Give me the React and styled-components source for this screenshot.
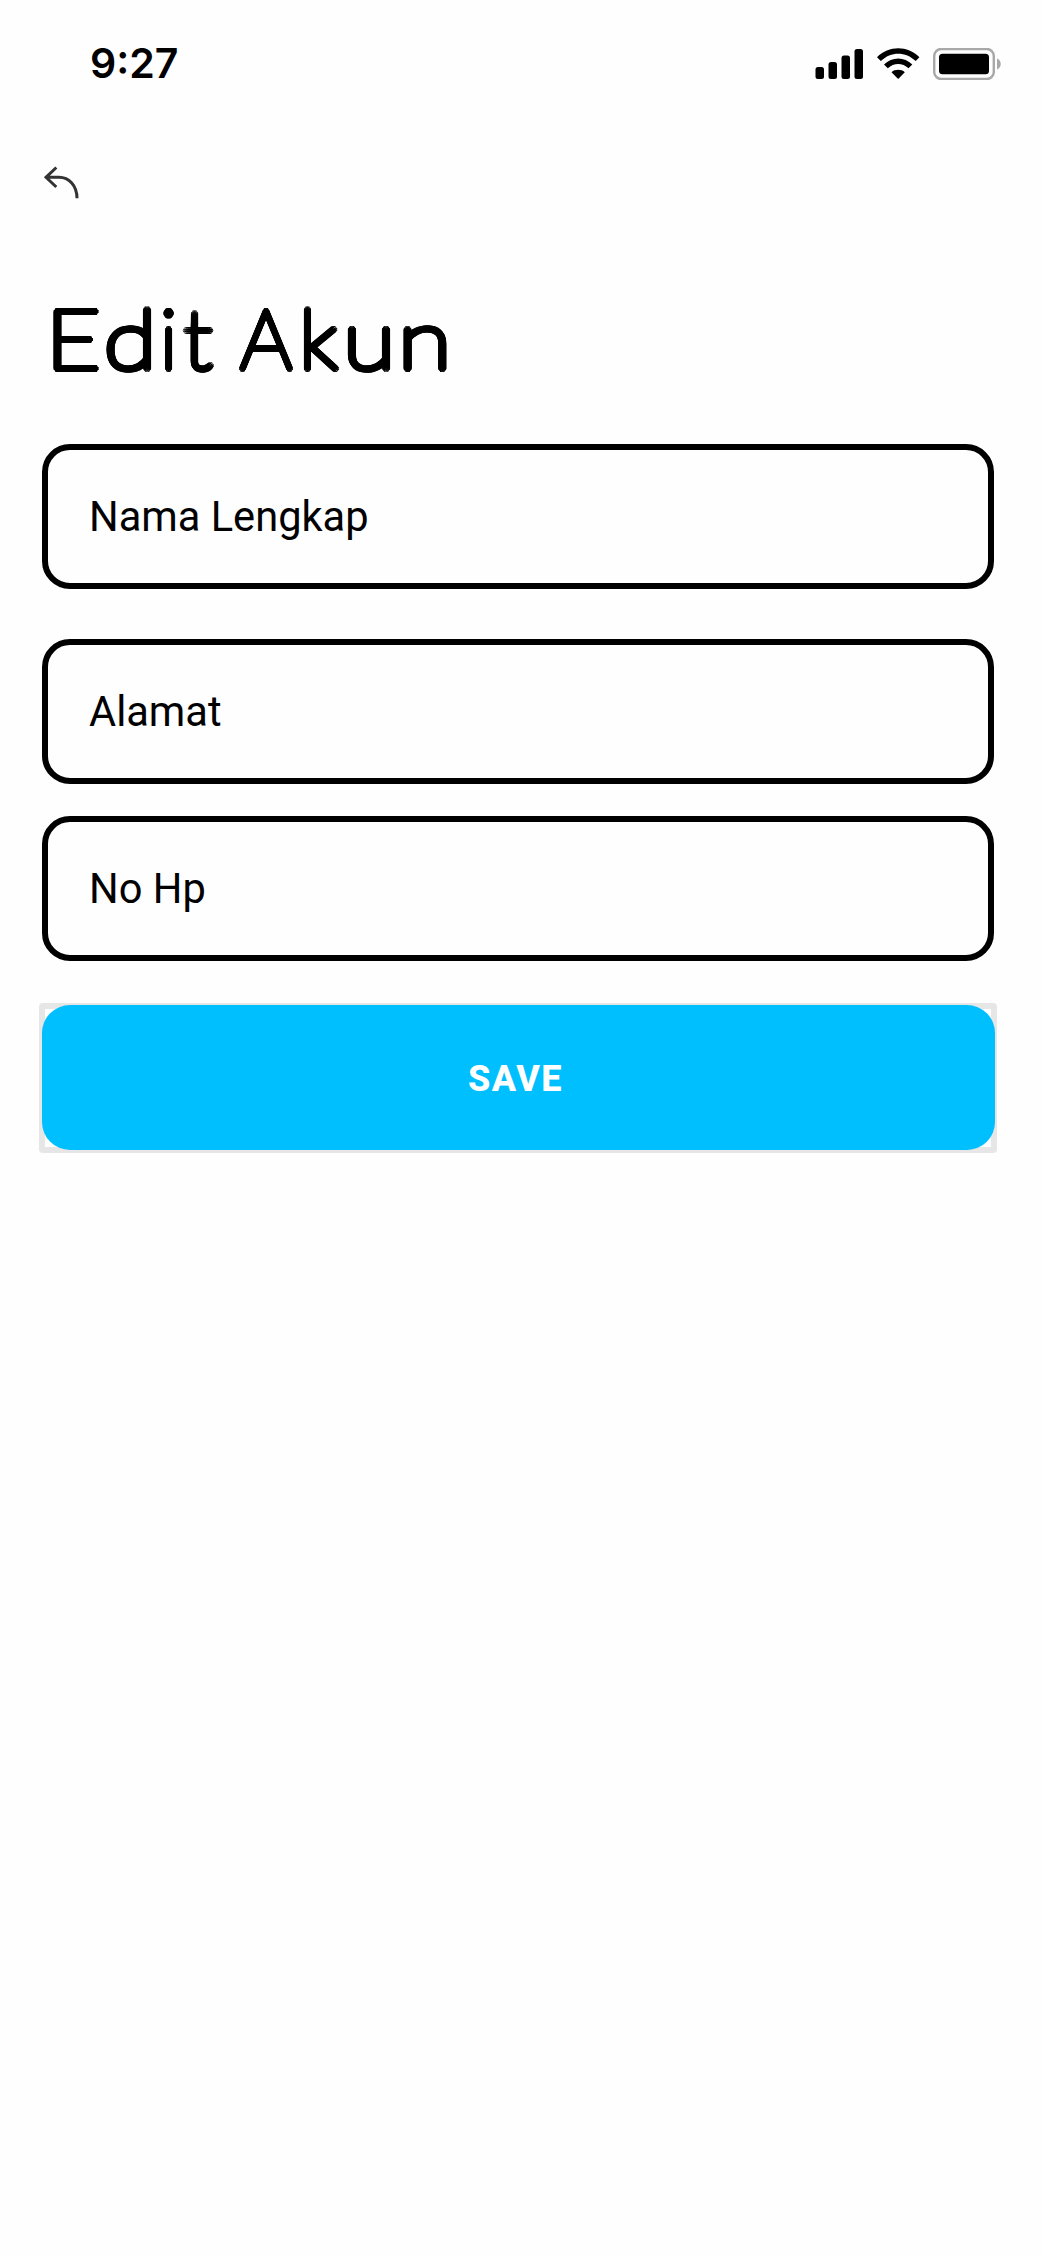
import React from "react";
import styled, { createGlobalStyle } from "styled-components";

const GlobalStyle = createGlobalStyle`
  * { box-sizing: border-box; }
  body { margin: 0; background: #fefefe; }
`;

const Screen = styled.main`
  width: 1042px;
  height: 2256px;
  background: #fefefe;
  color: #000;
  font-family: Roboto, "Liberation Sans", sans-serif;
  display: flex;
  flex-direction: column;
  overflow: hidden;
`;

const StatusBar = styled.header`
  height: 128px;
  padding: 0 41px 0 90px;
  display: flex;
  justify-content: space-between;
`;

const Time = styled.time`
  margin-top: 39px;
  font: 600 41px/48px Inter, sans-serif;
`;

const StatusIcons = styled.svg`
  width: 186px;
  height: 32px;
  margin-top: 48px;
`;

const BackButton = styled.button`
  width: 40px;
  height: 40px;
  margin: 34px 0 0 42px;
  padding: 0;
  border: 0;
  background: none;
  display: flex;
`;

// A ring of offset shadows thickens the hairline face with round stroke ends.
const ring = (radius, count) =>
  Array.from({ length: count }, (_, i) => {
    const angle = (i * 2 * Math.PI) / count;
    const x = (radius * Math.cos(angle)).toFixed(2);
    const y = (radius * Math.sin(angle)).toFixed(2);
    return `${x}px ${y}px 0 #000`;
  }).join(", ");

const Title = styled.h1`
  margin: 76px 0 0 46px;
  height: 120px;
  display: flex;
  font: 100 82.5px/120px Lato, sans-serif;
  text-shadow: ${ring(2.9, 24)}, ${ring(1.6, 12)};
  white-space: pre;
`;

const Glyph = styled.span`
  width: ${(p) => p.$width}px;
  flex: none;
  transform: scaleX(${(p) => p.$stretch});
  transform-origin: 0 50%;
`;

const Form = styled.form`
  margin: 46px 45px 0 39px;
  display: flex;
  flex-direction: column;
`;

const Field = styled.label`
  height: 145px;
  margin: 0 3px ${(p) => p.$gap}px 3px;
  padding: 0 0 0 41px;
  border: 6px solid #000;
  border-radius: 28px;
  display: flex;
  align-items: center;
  font-size: 41.6px;
  line-height: 49px;
`;

const SaveFrame = styled.div`
  width: 958px;
  height: 150px;
  padding: 2px;
  border-radius: 4px;
  background: linear-gradient(#fff, #fff) center / 946px 138px no-repeat #e6e6e6;
`;

const SaveButton = styled.button`
  width: 953px;
  height: 145px;
  margin-left: 1px;
  padding: 3px 6px 0 0;
  display: block;
  border: 0;
  border-radius: 28px;
  background: #00bfff;
  color: #fff;
  font: 800 36px/42px Roboto, sans-serif;
  letter-spacing: 1.5px;
`;

const titleLetters = [
  ["E", 58, 1.14], ["d", 56, 1.17], ["i", 23, 1], ["t", 28, 1.1], [" ", 29, 1],
  ["A", 59, 0.99], ["k", 44, 1.05], ["u", 55, 1.17], ["n", 50, 1.19],
];

const fields = [
  { name: "Nama Lengkap", gap: 50 },
  { name: "Alamat", gap: 32 },
  { name: "No Hp", gap: 42 },
];

export default function App() {
  return (
    <Screen>
      <GlobalStyle />
      <StatusBar>
        <Time>9:27</Time>
        <StatusIcons viewBox="815 48 186 32">
          <rect x="815.5" y="67" width="8.5" height="12" rx="2.5" />
          <rect x="828.5" y="62" width="8.5" height="17" rx="2.5" />
          <rect x="841.5" y="55.5" width="8.5" height="23.5" rx="2.5" />
          <rect x="854.5" y="49" width="8.5" height="30" rx="2.5" />
          <path d="M877 57.2C889 45.3 907.500 45.300 919.400 57.200L915.700 61C905.500 51.200 891 51.200 880.800 61Z" />
          <path d="M884 64.500C892 56.500 904.500 56.500 912.300 64.500L908.500 68.300C902.500 62.500 893.800 62.500 887.800 68.300Z" />
          <path d="M891.500 72.200C895 69 901.300 69 904.800 72.200L898.200 79Z" />
          <rect x="934.2" y="49" width="59.600" height="30" rx="7" fill="none" stroke="#a8a8a8" strokeWidth="2.4" />
          <rect x="939" y="53.700" width="50" height="20.500" rx="3.500" />
          <path d="M997 58.500C1002 60.500 1002 67.500 997 69.500Z" fill="#a8a8a8" />
        </StatusIcons>
      </StatusBar>
      <BackButton type="button" aria-label="Kembali">
        <svg width="40" height="40" viewBox="42 162 40 40" fill="none" stroke="#333" strokeWidth="3">
          <path d="M56.300 167.500L46 177.300L56.300 187M46 177.300H59C69 177.300 77 185.500 77 198.300" />
        </svg>
      </BackButton>
      <Title>
        {titleLetters.map(([letter, width, stretch], i) => (
          <Glyph key={i} $width={width} $stretch={stretch}>{letter}</Glyph>
        ))}
      </Title>
      <Form>
        {fields.map((f) => (
          <Field key={f.name} $gap={f.gap}>{f.name}</Field>
        ))}
        <SaveFrame>
          <SaveButton type="button">SAVE</SaveButton>
        </SaveFrame>
      </Form>
    </Screen>
  );
}
